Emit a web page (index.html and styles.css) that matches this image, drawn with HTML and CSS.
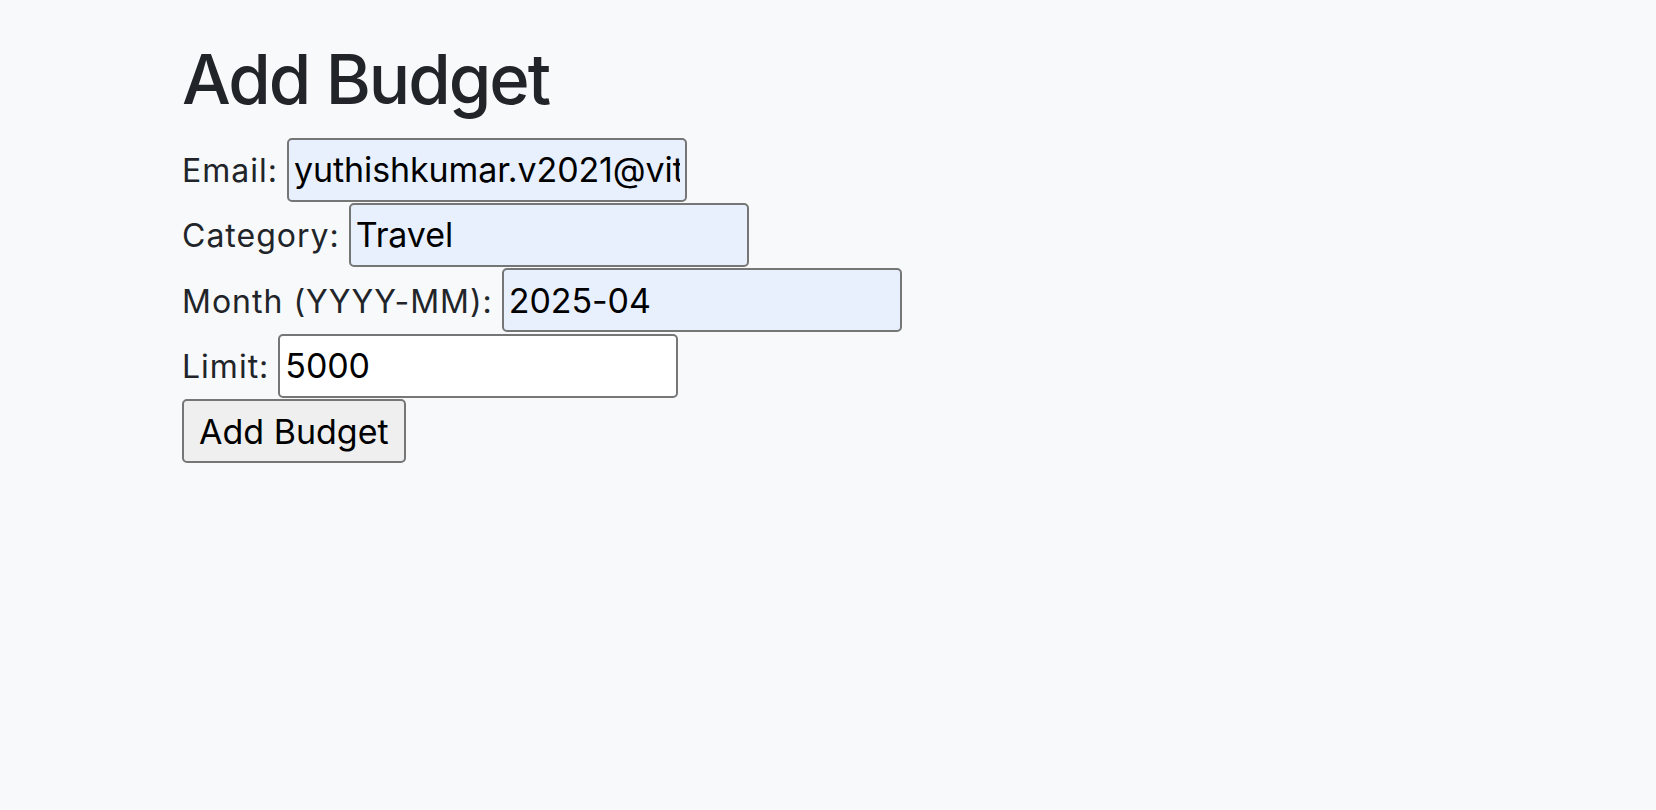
FILE: index.html
```html
<!DOCTYPE html>
<html lang="en">
<head>
<meta charset="utf-8">
<title>Add Budget</title>
<link rel="stylesheet" href="styles.css">
</head>
<body>
<main class="page">
  <h1 class="title">Add Budget</h1>
  <form class="budget-form">
    <div class="row">
      <label class="label" for="email">Email:</label>
      <input class="field autofill" id="email" type="text" value="yuthishkumar.v2021@vitstudent.ac.in">
    </div>
    <div class="row">
      <label class="label" for="category">Category:</label>
      <input class="field autofill" id="category" type="text" value="Travel">
    </div>
    <div class="row">
      <label class="label" for="month">Month (YYYY-MM):</label>
      <input class="field autofill" id="month" type="text" value="2025-04">
    </div>
    <div class="row">
      <label class="label" for="limit">Limit:</label>
      <input class="field" id="limit" type="text" value="5000">
    </div>
    <div class="row">
      <button class="btn" type="button">Add Budget</button>
    </div>
  </form>
</main>
</body>
</html>
```

FILE: styles.css
```css
html, body {
  margin: 0;
  padding: 0;
  background: #f8f9fa;
}

body {
  font-family: Inter, "Noto Sans", "Liberation Sans", sans-serif;
  color: #212529;
}

.page {
  padding: 38px 0 0 182px;
}

.title {
  margin: 0 0 17px;
  font-size: 68.8px;
  font-weight: 500;
  line-height: 1.2;
  letter-spacing: -2px;
  color: #212529;
}

.budget-form {
  display: flex;
  flex-direction: column;
  gap: 1.4px;
}

.row {
  display: flex;
  align-items: baseline;
  gap: 9px;
}

.label {
  font-size: 32px;
  line-height: 1.2;
  letter-spacing: 1px;
  color: #212529;
}

.field {
  box-sizing: border-box;
  width: 400px;
  height: 64px;
  padding: 0 5px;
  border: 2px solid #767676;
  border-radius: 5px;
  background: #ffffff;
  font-family: Inter, "Noto Sans", "Liberation Sans", sans-serif;
  font-size: 34px;
  letter-spacing: -0.1px;
  color: #000000;
  outline: none;
}

.field.autofill {
  background: #e8f0fe;
}

.btn {
  box-sizing: border-box;
  height: 64px;
  padding: 0 15px;
  border: 2px solid #767676;
  border-radius: 5px;
  background: #efefef;
  font-family: Inter, "Noto Sans", "Liberation Sans", sans-serif;
  font-size: 34px;
  color: #000000;
}
```
